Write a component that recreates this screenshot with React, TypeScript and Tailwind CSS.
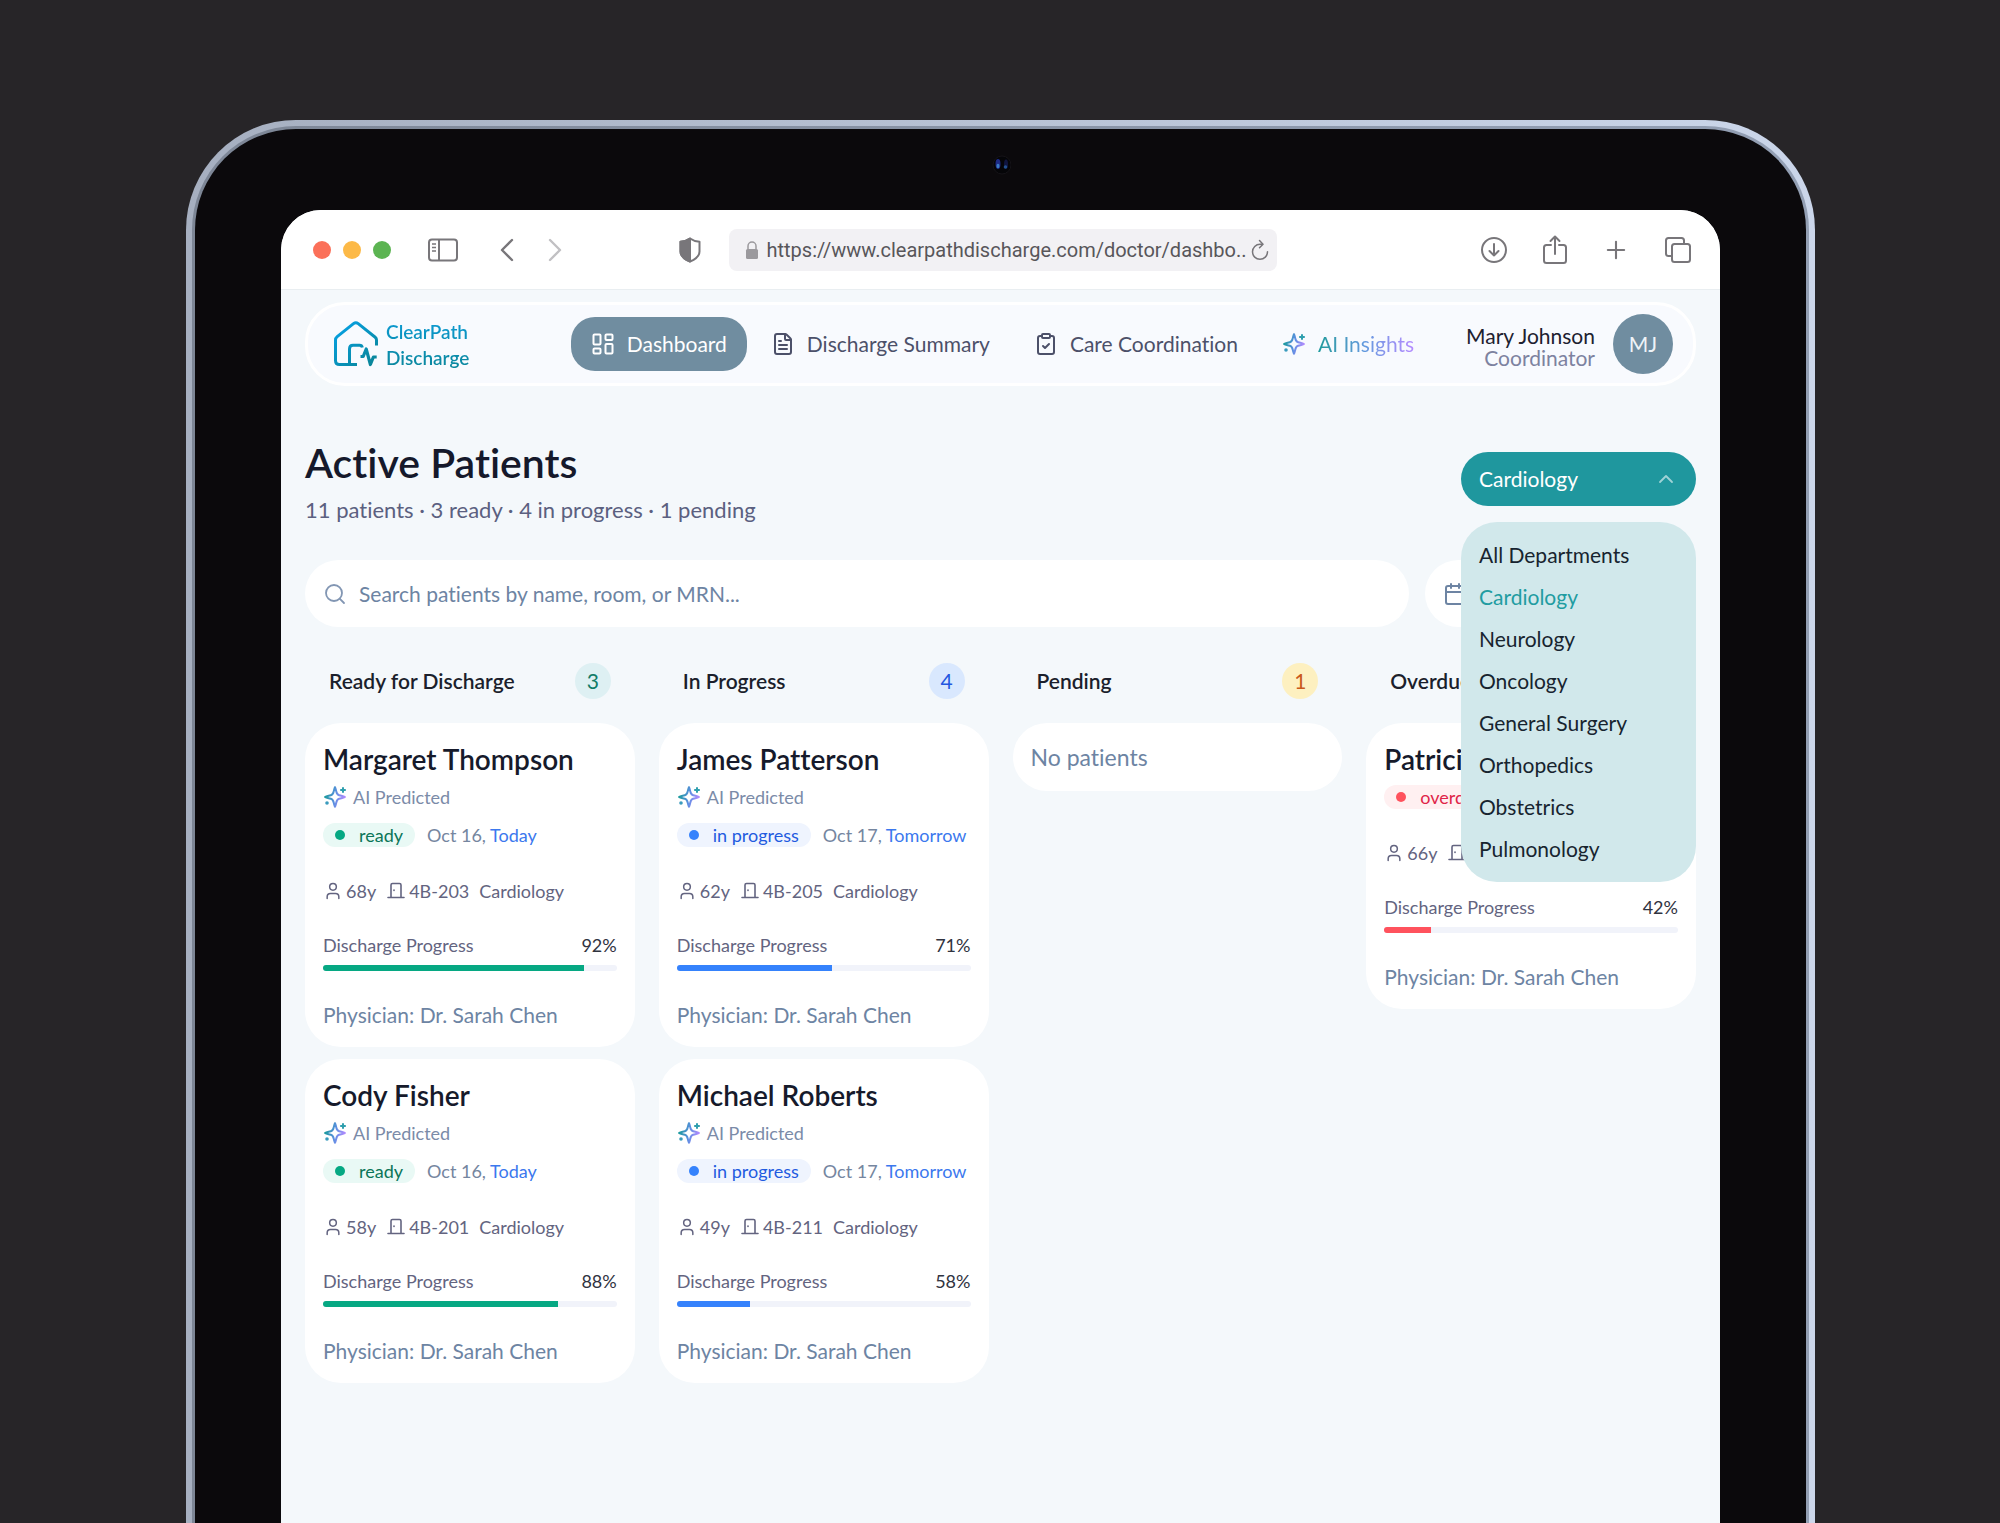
import React, { useState } from 'react';
import { User, Search, Calendar, FileText, ClipboardCheck, ChevronUp, ChevronDown, Plus } from 'lucide-react';
import clsx from 'clsx';

type Status = 'ready' | 'in progress' | 'overdue';

interface Patient {
  name: string;
  predicted: boolean;
  status: Status;
  date?: string;
  day?: string;
  age: number;
  room: string;
  department: string;
  progress: number;
  fill: number;
  physician: string;
}

interface Column {
  title: string;
  count: number;
  badge: string;
  patients: Patient[];
}

const DEPARTMENTS = [
  'All Departments',
  'Cardiology',
  'Neurology',
  'Oncology',
  'General Surgery',
  'Orthopedics',
  'Obstetrics',
  'Pulmonology',
];

const STATUS_STYLES: Record<Status, { pill: string; dot: string; bar: string }> = {
  ready: { pill: 'bg-[#e9f9f5] text-[#0b7558]', dot: 'bg-[#06a883]', bar: 'bg-[#06a883]' },
  'in progress': { pill: 'bg-[#eff4fe] text-[#1f5be0]', dot: 'bg-[#3582fc]', bar: 'bg-[#3582fc]' },
  overdue: { pill: 'bg-[#fff0f1] text-[#e02548]', dot: 'bg-[#ff525d]', bar: 'bg-[#ff525d]' },
};

const COLUMNS: Column[] = [
  {
    title: 'Ready for Discharge',
    count: 3,
    badge: 'bg-[#def0f3] text-[#117c68]',
    patients: [
      { name: 'Margaret Thompson', predicted: true, status: 'ready', date: 'Oct 16,', day: 'Today', age: 68, room: '4B-203', department: 'Cardiology', progress: 92, fill: 89, physician: 'Dr. Sarah Chen' },
      { name: 'Cody Fisher', predicted: true, status: 'ready', date: 'Oct 16,', day: 'Today', age: 58, room: '4B-201', department: 'Cardiology', progress: 88, fill: 80, physician: 'Dr. Sarah Chen' },
    ],
  },
  {
    title: 'In Progress',
    count: 4,
    badge: 'bg-[#d9e8fe] text-[#2457e0]',
    patients: [
      { name: 'James Patterson', predicted: true, status: 'in progress', date: 'Oct 17,', day: 'Tomorrow', age: 62, room: '4B-205', department: 'Cardiology', progress: 71, fill: 53, physician: 'Dr. Sarah Chen' },
      { name: 'Michael Roberts', predicted: true, status: 'in progress', date: 'Oct 17,', day: 'Tomorrow', age: 49, room: '4B-211', department: 'Cardiology', progress: 58, fill: 25, physician: 'Dr. Sarah Chen' },
    ],
  },
  { title: 'Pending', count: 1, badge: 'bg-[#fdf0c0] text-[#c9591a]', patients: [] },
  {
    title: 'Overdue',
    count: 3,
    badge: 'bg-[#ffe2e4] text-[#e02548]',
    patients: [
      { name: 'Patricia Lee', predicted: false, status: 'overdue', age: 66, room: '4B-208', department: 'Cardiology', progress: 42, fill: 16, physician: 'Dr. Sarah Chen' },
    ],
  },
];

const SparkleIcon = () => (
  <svg className="size-6 shrink-0" viewBox="0 0 24 24" fill="none" aria-hidden="true">
    <defs>
      <linearGradient id="sparkle" x1="2" y1="10" x2="22" y2="14" gradientUnits="userSpaceOnUse">
        <stop stopColor="#1a9a9c" />
        <stop offset="0.5" stopColor="#5b8fe0" />
        <stop offset="1" stopColor="#b48bff" />
      </linearGradient>
    </defs>
    <path
      d="M12 2c.5 0 .8 3.6 1.8 6 .5 1.2 1.1 1.8 2.3 2.2C18.500 11 22 11.400 22 12s-3.500 1-5.900 1.800c-1.200.4-1.800 1-2.300 2.200-1 2.400-1.300 6-1.800 6s-.8-3.600-1.800-6c-.5-1.200-1.100-1.800-2.300-2.200C5.500 13 2 12.600 2 12s3.500-1 5.900-1.800c1.200-.4 1.800-1 2.300-2.200 1-2.400 1.300-6 1.800-6z"
      stroke="url(#sparkle)"
      strokeWidth="2"
      strokeLinejoin="round"
    />
    <path d="M20 2.200v5.600M17.200 5h5.600" stroke="#2f9fae" strokeWidth="2" />
    <circle cx="4" cy="18" r="1.800" fill="#3a9bbd" />
  </svg>
);

const DoorIcon = () => (
  <svg className="size-5" viewBox="0 0 20 20" fill="none" stroke="currentColor" strokeWidth="1.600" strokeLinecap="round" strokeLinejoin="round" aria-hidden="true">
    <path d="M2 16.500h16M5 16.500V4a1.500 1.500 0 0 1 1.500-1.500h7A1.500 1.500 0 0 1 15 4v12.500" />
    <path d="M8 9v.4" />
  </svg>
);

const DashboardIcon = () => (
  <svg className="size-6" viewBox="0 0 24 24" fill="none" stroke="currentColor" strokeWidth="2" strokeLinejoin="round" aria-hidden="true">
    <rect x="2.500" y="2.500" width="7" height="10" rx="1" />
    <rect x="14.500" y="2.500" width="7" height="5.500" rx="1" />
    <rect x="14.500" y="12" width="7" height="9.500" rx="1" />
    <rect x="2.500" y="16.500" width="7" height="5" rx="1" />
  </svg>
);

const Logo = () => (
  <a href="#" className="flex items-center gap-[7px]">
    <svg className="h-[46px] w-[45px]" viewBox="0 0 45 46" fill="none" stroke="url(#logo)" strokeWidth="3" strokeLinejoin="round" aria-hidden="true">
      <defs>
        <linearGradient id="logo" x1="6" y1="4" x2="42" y2="44" gradientUnits="userSpaceOnUse">
          <stop stopColor="#06a0e2" />
          <stop offset="1" stopColor="#0a8495" />
        </linearGradient>
      </defs>
      <path d="M42.500 24.500V19c0-1.200-.4-2-1.300-2.700L24.200 2.700c-1.500-1.200-3.200-1.200-4.700 0L3.200 15.600C2 16.600 1.500 17.500 1.500 19v20.500c0 2.500 1.400 4 4 4H23" />
      <path d="M15.500 43.500V28c0-2.500 1.200-3.700 3.500-3.700h6.500c1.600 0 2.500.7 2.800 2.200" />
      <path d="M26.500 35.500h2.700l3-7.500 4.200 15.500 3-7.500h3.300" strokeWidth="3.200" />
    </svg>
    <span className="bg-linear-to-b from-[#0d9bd6] to-[#0c869a] bg-clip-text pt-0.5 text-[19px] leading-[26px] font-semibold text-transparent">
      ClearPath
      <br />
      Discharge
    </span>
  </a>
);

const BrowserBar = () => (
  <div className="grid h-[80px] grid-cols-[1fr_548px_1fr] items-center gap-7 border-b border-[#e9eef1] bg-white pr-7 pl-8 text-[#78767a]">
    <div className="flex items-center">
      <div className="flex gap-3">
        <span className="size-[18px] rounded-full bg-[#fb7059]" />
        <span className="size-[18px] rounded-full bg-[#fcb947]" />
        <span className="size-[18px] rounded-full bg-[#5cb452]" />
      </div>
      <button type="button" aria-label="Sidebar" className="ml-9">
        <svg className="h-6 w-8" viewBox="0 0 32 24" fill="none" stroke="currentColor" strokeWidth="2">
          <rect x="2" y="1.500" width="28" height="21" rx="3" />
          <path d="M12 1.500v21" />
          <path d="M5 6h4M5 9.500h4M5 13h4" strokeWidth="1.400" />
        </svg>
      </button>
      <button type="button" aria-label="Back" className="ml-10">
        <svg className="h-6 w-4" viewBox="0 0 16 24" fill="none" stroke="currentColor" strokeWidth="2.400" strokeLinecap="round" strokeLinejoin="round">
          <path d="M13 2 3 12l10 10" />
        </svg>
      </button>
      <button type="button" aria-label="Forward" className="ml-8 text-[#c1c0c3]">
        <svg className="h-6 w-4" viewBox="0 0 16 24" fill="none" stroke="currentColor" strokeWidth="2.400" strokeLinecap="round" strokeLinejoin="round">
          <path d="m3 2 10 10L3 22" />
        </svg>
      </button>
      <button type="button" aria-label="Privacy report" className="ml-auto">
        <svg className="h-[26px] w-[22px]" viewBox="0 0 22 26" fill="none" stroke="currentColor" strokeWidth="2" strokeLinejoin="round">
          <path d="M11 1.500C8.500 3.300 5 4.500 1.500 4.800v9.700c0 4.500 4.500 8 9.500 10 5-2 9.500-5.500 9.500-10V4.800C17 4.500 13.500 3.300 11 1.500z" />
          <path d="M11 1.500C8.500 3.300 5 4.500 1.500 4.800v9.700c0 4.500 4.500 8 9.500 10z" fill="currentColor" />
        </svg>
      </button>
    </div>

    <div className="flex h-[42px] items-center rounded-lg bg-[#f2f1f4] pr-2 pl-4">
      <svg className="mr-2 h-[18px] w-[14px] shrink-0 text-[#9b999d]" viewBox="0 0 14 18" aria-hidden="true">
        <rect x="1" y="8" width="12" height="10" rx="1.500" fill="currentColor" />
        <path d="M3 8.500V5a4 4 0 0 1 8 0v3.500" fill="none" stroke="currentColor" strokeWidth="1.500" />
      </svg>
      <input
        aria-label="Address"
        className="min-w-0 flex-1 bg-transparent font-[Roboto,sans-serif] text-[20px] text-[#58565a] outline-none"
        defaultValue="https://www.clearpathdischarge.com/doctor/dashbo.."
      />
      <button type="button" aria-label="Reload">
        <svg className="h-[22px] w-[18px]" viewBox="0 0 18 22" fill="none" stroke="currentColor" strokeWidth="1.500" strokeLinecap="round" strokeLinejoin="round">
          <path d="M11.500 5.300H9a7.500 7.500 0 1 0 7.500 7.500" />
          <path d="m8.500 1.500 3.500 3.700-3.500 3.600" />
        </svg>
      </button>
    </div>

    <div className="flex items-center justify-end gap-[34px]">
      <button type="button" aria-label="Downloads">
        <svg className="size-7" viewBox="0 0 28 28" fill="none" stroke="currentColor" strokeWidth="2" strokeLinecap="round" strokeLinejoin="round">
          <circle cx="14" cy="14" r="12" />
          <path d="M14 8v11.500M9.500 15l4.500 4.500 4.500-4.500" />
        </svg>
      </button>
      <button type="button" aria-label="Share">
        <svg className="h-[30px] w-[26px]" viewBox="0 0 26 30" fill="none" stroke="currentColor" strokeWidth="2" strokeLinecap="round" strokeLinejoin="round">
          <path d="M9 10H4.500A2.500 2.500 0 0 0 2 12.500v13A2.500 2.500 0 0 0 4.500 28h17a2.500 2.500 0 0 0 2.500-2.500v-13a2.500 2.500 0 0 0-2.500-2.500H17" />
          <path d="M13 19V2M8.500 6 13 1.500 17.500 6" />
        </svg>
      </button>
      <button type="button" aria-label="New tab">
        <Plus className="size-7" strokeWidth={1.8} />
      </button>
      <button type="button" aria-label="Show tabs">
        <svg className="size-7" viewBox="0 0 28 28" fill="none" stroke="currentColor" strokeWidth="2" strokeLinejoin="round">
          <path d="M8 20H4.500A2.500 2.500 0 0 1 2 17.500v-13A2.500 2.500 0 0 1 4.500 2h13A2.500 2.500 0 0 1 20 4.500V8" />
          <rect x="8" y="8" width="18" height="18" rx="2.500" />
        </svg>
      </button>
    </div>
  </div>
);

const navItem = 'flex h-[54px] items-center gap-3 rounded-3xl px-5 text-[21px]';

const Header = () => (
  <header className="flex h-[84px] items-center rounded-[40px] border-3 border-white bg-[#f8fafe] pr-5 pl-[26px]">
    <Logo />
    <nav className="ml-auto flex gap-1">
      <a href="#" className={clsx(navItem, 'bg-[#708da0] text-white')}>
        <DashboardIcon />
        Dashboard
      </a>
      <a href="#" className={clsx(navItem, 'text-[#4c5069]')}>
        <FileText className="size-6" />
        Discharge Summary
      </a>
      <a href="#" className={clsx(navItem, 'text-[#4c5069]')}>
        <ClipboardCheck className="size-6" />
        Care Coordination
      </a>
      <a href="#" className={navItem}>
        <SparkleIcon />
        <span className="bg-linear-to-r from-[#1a9a9c] via-[#6499e0] to-[#b48bff] bg-clip-text text-transparent">AI Insights</span>
      </a>
    </nav>
    <div className="ml-8 flex items-center gap-[18px]">
      <div className="pt-1.5 text-right text-[21px] leading-[22px]">
        <div className="text-[#1d2130]">Mary Johnson</div>
        <div className="text-[#7d82a0]">Coordinator</div>
      </div>
      <div className="flex size-[60px] items-center justify-center rounded-full bg-[#708da0] text-[21px] text-[#eef3f7]">MJ</div>
    </div>
  </header>
);

const PatientCard: React.FC<{ patient: Patient }> = ({ patient }) => {
  const styles = STATUS_STYLES[patient.status];

  return (
    <article className="rounded-[36px] bg-white p-[18px] text-[18px] leading-6">
      <h3 className="text-[28px] leading-9 font-semibold text-[#161a2b]">{patient.name}</h3>

      {patient.predicted && (
        <div className="mt-2 mb-3.5 flex items-center gap-1.5 text-[#7b8ba8]">
          <SparkleIcon />
          AI Predicted
        </div>
      )}

      {/* Status and expected date */}
      <div className="mt-2 flex items-center gap-3">
        <span className={clsx('flex items-center gap-3.5 rounded-full px-3', styles.pill)}>
          <span className={clsx('size-2.5 rounded-full', styles.dot)} />
          {patient.status}
        </span>
        {patient.date && (
          <span className="text-[#75869f]">
            {patient.date} <span className="text-[#3b78ee]">{patient.day}</span>
          </span>
        )}
      </div>

      {/* Details */}
      <div className="mt-8 flex items-center gap-2.5 text-[#636480]">
        <span className="flex items-center gap-[3px]">
          <User className="size-5" strokeWidth={1.8} />
          {patient.age}y
        </span>
        <span className="flex items-center gap-[3px]">
          <DoorIcon />
          {patient.room}
        </span>
        <span>{patient.department}</span>
      </div>

      {/* Progress */}
      <div className="mt-[30px] flex justify-between text-[#636480]">
        <span>Discharge Progress</span>
        <span className="text-[#30333f]">{patient.progress}%</span>
      </div>
      <div className="mt-2 h-1.5 overflow-hidden rounded-full bg-[#f1f3fa]">
        <div className={clsx('h-full', styles.bar)} style={{ width: `${patient.fill}%` }} />
      </div>

      <p className="mt-[30px] text-[21px] leading-7 text-[#6d84a3]">Physician: {patient.physician}</p>
    </article>
  );
};

const DepartmentSelect = () => {
  const [open, setOpen] = useState(true);
  const [selected, setSelected] = useState('Cardiology');

  return (
    <div className="relative mt-3 w-[235px] text-[21px]">
      <button
        type="button"
        aria-haspopup="listbox"
        aria-expanded={open}
        onClick={() => setOpen(!open)}
        className="flex h-[54px] w-full items-center justify-between rounded-full bg-[#1f979e] pr-[18px] pl-[18px] text-white"
      >
        {selected}
        {open ? <ChevronUp className="size-6 text-[#9fd3d6]" strokeWidth={1.8} /> : <ChevronDown className="size-6 text-[#9fd3d6]" strokeWidth={1.8} />}
      </button>
      {open && (
        <ul role="listbox" aria-label="Department" className="absolute top-full right-0 z-10 mt-4 w-full rounded-[36px] bg-[#d1e8eb] py-3">
          {DEPARTMENTS.map((name) => (
            <li key={name} role="option" aria-selected={name === selected}>
              <button
                type="button"
                onClick={() => setSelected(name)}
                className={clsx('block h-[42px] w-full px-[18px] text-left', name === selected ? 'text-[#219ca1]' : 'text-[#17242f]')}
              >
                {name}
              </button>
            </li>
          ))}
        </ul>
      )}
    </div>
  );
};

export default function App() {
  const [query, setQuery] = useState('');

  return (
    <div className="flex min-h-screen flex-col bg-[#272528] pt-[120px] pr-[9.25%] pl-[9.3%] font-[Lato,sans-serif] [font-variant-ligatures:none]">
      {/* Tablet frame */}
      <div className="flex grow flex-col rounded-t-[110px] bg-linear-to-r from-[#a6afc0] to-[#cbd6ea] px-1.5 pt-1.5">
        <div className="flex grow flex-col rounded-t-[104px] bg-linear-to-r from-[#7d8696] to-[#939fb4] px-[3px] pt-[3px]">
          <div className="flex grow flex-col rounded-t-[101px] bg-[#0b090c] px-[86px]">
            <div className="flex h-[81px] items-center justify-center pb-2.5">
              <svg className="size-5" viewBox="0 0 20 20" aria-hidden="true">
                <circle cx="11" cy="10" r="9" fill="#050508" stroke="#151318" />
                <ellipse cx="7" cy="9" rx="2.500" ry="5" fill="#1d2a86" />
                <ellipse cx="7" cy="11" rx="1.500" ry="2.200" fill="#3b7cc4" />
                <ellipse cx="15" cy="9" rx="2" ry="4.500" fill="#10153f" />
                <circle cx="14.500" cy="12" r="1.800" fill="#23508f" />
              </svg>
            </div>

            <div className="flex grow flex-col overflow-hidden rounded-t-[40px] bg-[#f4f8fb]">
              <BrowserBar />

              <div className="px-6 pt-3 pb-10">
                <Header />

                <div className="mt-[54px] flex items-start justify-between">
                  <div>
                    <h1 className="text-[41px] leading-[46px] font-semibold text-[#15192b]">Active Patients</h1>
                    <p className="mt-2 text-[22px] leading-8 text-[#5b6080]">11 patients · 3 ready · 4 in progress · 1 pending</p>
                  </div>
                  <DepartmentSelect />
                </div>

                {/* Search and date filter */}
                <div className="mt-[34px] flex gap-4">
                  <label className="flex h-[67px] flex-1 items-center gap-3 rounded-full bg-white px-[18px]">
                    <Search className="size-6 text-[#8296b3]" strokeWidth={1.8} />
                    <input
                      type="text"
                      aria-label="Search patients"
                      value={query}
                      onChange={(e) => setQuery(e.target.value)}
                      placeholder="Search patients by name, room, or MRN..."
                      className="flex-1 text-[21px] text-[#15192b] outline-none placeholder:text-[#6d84a3]"
                    />
                  </label>
                  <button type="button" aria-label="Filter by date" className="flex h-[67px] w-[271px] items-center rounded-full bg-white px-[18px]">
                    <Calendar className="size-6 text-[#6d84a3]" />
                  </button>
                </div>

                {/* Board */}
                <div className="mt-9 grid grid-cols-4 gap-6">
                  {COLUMNS.map((column) => (
                    <section key={column.title}>
                      <div className="flex items-center justify-between px-6 text-[21px]">
                        <h2 className="font-semibold text-[#1b1f2c]">{column.title}</h2>
                        <span className={clsx('flex size-9 items-center justify-center rounded-full', column.badge)}>{column.count}</span>
                      </div>
                      <div className="mt-6 flex flex-col gap-3">
                        {column.patients.map((patient) => (
                          <PatientCard key={patient.name} patient={patient} />
                        ))}
                        {column.patients.length === 0 && (
                          <p className="rounded-[36px] bg-white p-[18px] text-[23px] leading-8 text-[#6d84a3]">No patients</p>
                        )}
                      </div>
                    </section>
                  ))}
                </div>
              </div>
            </div>
          </div>
        </div>
      </div>
    </div>
  );
}
